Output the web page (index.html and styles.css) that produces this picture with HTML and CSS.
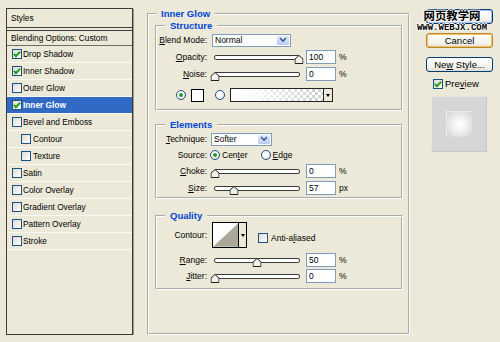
FILE: index.html
```html
<!DOCTYPE html>
<html lang="en">
<head>
    <meta charset="UTF-8" />
    <meta name="viewport" content="width=device-width, initial-scale=1.0" />
    <title>Layer Style</title>
    <link rel="stylesheet" href="styles.css">
</head>
<body>

<div class="dialog">

    <!-- Styles list -->
    <div class="styles-panel">
        <div class="panel-head">Styles</div>
        <div class="panel-blend">Blending Options: Custom</div>
        <ul class="fx-list">
            <li><span class="check on"></span>Drop Shadow</li>
            <li><span class="check on"></span>Inner Shadow</li>
            <li><span class="check"></span>Outer Glow</li>
            <li class="active"><span class="check on"></span>Inner Glow</li>
            <li><span class="check"></span>Bevel and Emboss</li>
            <li class="sub"><span class="check"></span>Contour</li>
            <li class="sub"><span class="check"></span>Texture</li>
            <li><span class="check"></span>Satin</li>
            <li><span class="check"></span>Color Overlay</li>
            <li><span class="check"></span>Gradient Overlay</li>
            <li><span class="check"></span>Pattern Overlay</li>
            <li><span class="check"></span>Stroke</li>
        </ul>
    </div>

    <!-- Inner Glow options -->
    <fieldset class="group main">
        <legend>Inner Glow</legend>

        <fieldset class="group box structure">
            <legend>Structure</legend>
            <div class="rows">
                <div class="row">
                    <label class="lbl"><u>B</u>lend Mode:</label>
                    <div class="select blend">
                        <span>Normal</span>
                        <i class="drop"><svg width="8" height="6" viewBox="0 0 8 6"><path d="M1 1l3 3 3-3" fill="none" stroke="#3d5a8f" stroke-width="1.6"/></svg></i>
                    </div>
                </div>
                <div class="row">
                    <label class="lbl"><u>O</u>pacity:</label>
                    <div class="slider"><span class="thumb" style="left: 100%"><svg width="9" height="9" viewBox="0 0 9 9"><path d="M0.5 8.5V4L4.5 0.5L8.5 4V8.5Z" fill="#f2f1ec" stroke="#222"/></svg></span></div>
                    <input class="num" type="text" value="100">
                    <span class="unit">%</span>
                </div>
                <div class="row">
                    <label class="lbl"><u>N</u>oise:</label>
                    <div class="slider"><span class="thumb" style="left: 0%"><svg width="9" height="9" viewBox="0 0 9 9"><path d="M0.5 8.5V4L4.5 0.5L8.5 4V8.5Z" fill="#f2f1ec" stroke="#222"/></svg></span></div>
                    <input class="num" type="text" value="0">
                    <span class="unit">%</span>
                </div>
                <div class="row color-row">
                    <span class="radio on"></span>
                    <span class="swatch"></span>
                    <span class="radio second"></span>
                    <div class="gradient">
                        <span class="fill"></span>
                        <span class="arrow"><i></i></span>
                    </div>
                </div>
            </div>
        </fieldset>

        <fieldset class="group box elements">
            <legend>Elements</legend>
            <div class="rows">
                <div class="row">
                    <label class="lbl"><u>T</u>echnique:</label>
                    <div class="select technique">
                        <span>Softer</span>
                        <i class="drop"><svg width="8" height="6" viewBox="0 0 8 6"><path d="M1 1l3 3 3-3" fill="none" stroke="#3d5a8f" stroke-width="1.6"/></svg></i>
                    </div>
                </div>
                <div class="row source">
                    <label class="lbl">Source:</label>
                    <span class="radio on"></span>
                    <span class="opt">Cen<u>t</u>er</span>
                    <span class="radio edge"></span>
                    <span class="opt"><u>E</u>dge</span>
                </div>
                <div class="row">
                    <label class="lbl"><u>C</u>hoke:</label>
                    <div class="slider"><span class="thumb" style="left: 0%"><svg width="9" height="9" viewBox="0 0 9 9"><path d="M0.5 8.5V4L4.5 0.5L8.5 4V8.5Z" fill="#f2f1ec" stroke="#222"/></svg></span></div>
                    <input class="num" type="text" value="0">
                    <span class="unit">%</span>
                </div>
                <div class="row">
                    <label class="lbl"><u>S</u>ize:</label>
                    <div class="slider"><span class="thumb" style="left: 23%"><svg width="9" height="9" viewBox="0 0 9 9"><path d="M0.5 8.5V4L4.5 0.5L8.5 4V8.5Z" fill="#f2f1ec" stroke="#222"/></svg></span></div>
                    <input class="num" type="text" value="57">
                    <span class="unit">px</span>
                </div>
            </div>
        </fieldset>

        <fieldset class="group box quality">
            <legend>Quality</legend>
            <div class="rows">
                <div class="row contour-row">
                    <label class="lbl">Contour:</label>
                    <div class="contour">
                        <svg width="26" height="24" viewBox="0 0 26 24"><path d="M0 24L26 0V24Z" fill="#aca899"/></svg>
                        <span class="arrow"><i></i></span>
                    </div>
                    <span class="aa"><span class="check"></span><span>Anti-a<u>l</u>iased</span></span>
                </div>
                <div class="row range">
                    <label class="lbl"><u>R</u>ange:</label>
                    <div class="slider"><span class="thumb" style="left: 50%"><svg width="9" height="9" viewBox="0 0 9 9"><path d="M0.5 8.5V4L4.5 0.5L8.5 4V8.5Z" fill="#f2f1ec" stroke="#222"/></svg></span></div>
                    <input class="num" type="text" value="50">
                    <span class="unit">%</span>
                </div>
                <div class="row jitter">
                    <label class="lbl"><u>J</u>itter:</label>
                    <div class="slider"><span class="thumb" style="left: 0%"><svg width="9" height="9" viewBox="0 0 9 9"><path d="M0.5 8.5V4L4.5 0.5L8.5 4V8.5Z" fill="#f2f1ec" stroke="#222"/></svg></span></div>
                    <input class="num" type="text" value="0">
                    <span class="unit">%</span>
                </div>
            </div>
        </fieldset>
    </fieldset>

    <!-- Buttons -->
    <div class="side">
        <button class="btn ok"></button>
        <button class="btn cancel">Cancel</button>
        <button class="btn">Ne<u>w</u> Style...</button>
        <div class="preview-toggle"><span class="check on"></span><span>Pre<u>v</u>iew</span></div>
        <div class="preview"><div class="glow"></div></div>

        <div class="watermark">
            <b>网页教学网</b>
            <span>WWW.WEBJX.COM</span>
        </div>
    </div>

</div>

</body>
</html>
```

FILE: styles.css
```css
* {
    box-sizing: border-box;
    margin: 0;
    padding: 0;
}

body {
    background: #ece9d8;
    font-family: "Liberation Sans", Arial, sans-serif;
    font-size: 8.5px;
    color: #000;
}

.dialog {
    display: flex;
    align-items: flex-start;
    padding: 8px 0 0 6px;
}

/* Styles list */
.styles-panel {
    width: 127px;
    height: 327px;
    border: 1px solid #3c3c3c;
    box-shadow: 1px 1px 0 #9c998c;
    font-size: 8.3px;
}

.panel-head {
    height: 19px;
    line-height: 18px;
    padding-left: 4px;
    border-bottom: 1px solid #3c3c3c;
}

.panel-blend {
    height: 16px;
    margin-top: 2px;
    line-height: 14px;
    padding-left: 4px;
    border-top: 1px solid #3c3c3c;
    border-bottom: 1px solid #6f6d64;
}

.fx-list {
    list-style: none;
}

.fx-list li {
    display: flex;
    align-items: center;
    gap: 1px;
    height: 17px;
    padding-left: 5px;
    border-bottom: 1px solid #faf9f4;
}

.fx-list li.sub {
    padding-left: 14px;
    gap: 2px;
}

.fx-list li.active {
    background: #316ac5;
    color: #fff;
    font-weight: bold;
}

.check {
    display: inline-grid;
    place-items: center;
    width: 10px;
    height: 10px;
    flex-shrink: 0;
    border: 1px solid #1c5180;
    background: linear-gradient(135deg, #dcdbd3, #fff);
}

.check.on::after {
    content: "";
    width: 2px;
    height: 5px;
    margin-top: -2px;
    border: solid #21a121;
    border-width: 0 2px 2px 0;
    transform: rotate(45deg);
}

/* Group boxes */
.group {
    border: 2px groove #fff;
    min-width: 0;
}

.group > legend {
    margin-left: 8px;
    padding: 0 4px;
    font-size: 9.5px;
    line-height: 11px;
    font-weight: bold;
    color: #0046d5;
}

.main {
    width: 263px;
    height: 327px;
    margin-left: 14px;
}

.box {
    margin: 0 5px 0 6px;
}

.box > legend {
    padding: 0 5px;
}

.structure {
    margin-top: 1px;
}

.elements {
    margin-top: 8px;
}

.quality {
    margin-top: 11px;
}

.rows {
    display: flex;
    flex-direction: column;
    gap: 3px;
}

.structure .rows {
    padding: 2px 0 7px;
}

.elements .rows {
    padding: 2px 0 2px;
}

.quality .rows {
    padding: 1px 0 5px;
    gap: 2px;
}

.row {
    display: flex;
    align-items: center;
    height: 14px;
}

.lbl {
    width: 50px;
    flex-shrink: 0;
    text-align: right;
}

/* Combo boxes */
.select {
    display: flex;
    height: 13px;
    margin-left: 5px;
    border: 1px solid #7f9db9;
    background: #fff;
}

.select span {
    flex: 1;
    padding-left: 2px;
    line-height: 11px;
}

.select .drop {
    display: grid;
    place-items: center;
    width: 14px;
    border: 1px solid #fff;
    border-radius: 2px;
    background: linear-gradient(#e3ebfd, #b8cbf3);
}

.blend {
    width: 79px;
}

.technique {
    width: 61px;
    margin-left: 4px;
}

/* Sliders */
.slider {
    position: relative;
    width: 86px;
    height: 5px;
    margin-left: 7px;
    border: 1px solid #3a3a3a;
    border-radius: 2px;
    background: #fff;
}

.thumb {
    position: absolute;
    top: -1px;
    width: 9px;
    height: 9px;
    transform: translateX(-50%);
}

.thumb svg {
    display: block;
}

.num {
    width: 30px;
    height: 14px;
    margin-left: 6px;
    padding-left: 2px;
    border: 1px solid #7f9db9;
    background: #fff;
    font: inherit;
    color: #000;
    outline: none;
}

.unit {
    margin-left: 3px;
}

/* Radios and colour */
.radio {
    display: inline-grid;
    place-items: center;
    width: 10px;
    height: 10px;
    flex-shrink: 0;
    border: 1px solid #1c5180;
    border-radius: 50%;
    background: radial-gradient(circle at 35% 35%, #fff 30%, #d8d6cc);
}

.radio.on::after {
    content: "";
    width: 4px;
    height: 4px;
    border-radius: 50%;
    background: #21a121;
}

.color-row {
    margin-top: 4px;
    padding-left: 19px;
}

.swatch {
    width: 13px;
    height: 13px;
    margin-left: 5px;
    border: 1px solid #000;
    background: #fff;
}

.radio.second {
    margin-left: 11px;
}

.gradient {
    display: flex;
    width: 103px;
    height: 14px;
    margin-left: 5px;
    border: 1px solid #222;
}

.gradient .fill {
    flex: 1;
    background:
        linear-gradient(to right, #fff 15%, rgba(255, 255, 255, 0) 90%),
        repeating-conic-gradient(#d2d2d2 0 25%, #fff 0 50%) 0 0 / 6px 6px;
}

.arrow {
    display: grid;
    place-items: center;
    width: 9px;
    border-left: 1px solid #222;
    background: #ece9d8;
}

.arrow i {
    border-top: 3px solid #000;
    border-left: 2px solid transparent;
    border-right: 2px solid transparent;
}

.source {
    height: 12px;
}

.source .radio {
    margin-left: 3px;
}

.source .radio.edge {
    margin-left: 13px;
}

.opt {
    margin-left: 2px;
}

/* Quality */
.contour-row {
    height: 26px;
}

.contour {
    display: flex;
    width: 35px;
    height: 26px;
    margin-left: 5px;
    border: 1px solid #000;
    background: #fff;
}

.contour svg {
    display: block;
}

.contour .arrow {
    width: 8px;
    border-left-color: #000;
}

.aa {
    display: flex;
    align-items: center;
    margin: 6px 0 0 11px;
}

.aa .check {
    margin-right: 3px;
}

.range {
    margin-top: 3px;
}

/* Right column */
.side {
    position: relative;
    width: 67px;
    margin-left: 16px;
    padding-top: 1px;
    font-size: 9.5px;
}

.btn {
    display: block;
    width: 67px;
    height: 15px;
    margin-bottom: 9px;
    border: 1px solid #003c74;
    border-radius: 3px;
    background: linear-gradient(#fff, #f2f1ea 75%, #dedbcf);
    font: inherit;
    line-height: 13px;
    color: #000;
    text-align: center;
    cursor: pointer;
}

.btn.ok {
    box-shadow: inset 0 0 0 1px #a9c2f0;
}

.btn.cancel {
    border-color: #b8862a;
    box-shadow: inset 0 0 0 1px #f7c360;
}

.preview-toggle {
    display: flex;
    align-items: center;
    gap: 2px;
    margin-top: -2px;
    padding-left: 7px;
    line-height: 10px;
}

.preview {
    display: grid;
    place-items: center;
    width: 56px;
    height: 56px;
    margin: 7px 0 0 5px;
    border: 1px solid #e4e4e4;
    border-right-color: #c8c8c8;
    border-bottom-color: #c8c8c8;
    background: #d6d6d6;
}

.glow {
    width: 26px;
    height: 26px;
    border-top: 1px solid #ececec;
    border-left: 1px solid #ececec;
    background: radial-gradient(circle, #fff 0%, #f6f6f6 30%, #d2d2d2 100%);
}

/* Watermark over the OK button */
.watermark {
    position: absolute;
    top: 1px;
    left: -14px;
    width: 80px;
    text-align: center;
    pointer-events: none;
    text-shadow: 1px 0 0 #fff, -1px 0 0 #fff, 0 1px 0 #fff, 0 -1px 0 #fff;
}

.watermark b {
    display: block;
    font-family: "Noto Sans CJK SC", sans-serif;
    font-size: 11.4px;
    line-height: 12px;
}

.watermark span {
    display: block;
    margin-top: 3px;
    font-family: "Liberation Mono", monospace;
    font-weight: bold;
    font-size: 9px;
    line-height: 8px;
}
```
